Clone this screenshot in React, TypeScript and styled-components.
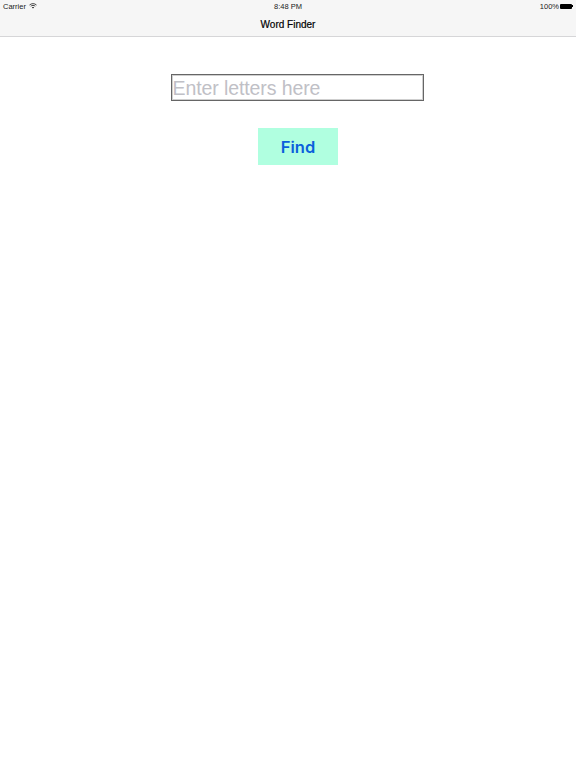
import styled, { createGlobalStyle } from "styled-components";

const GlobalStyle = createGlobalStyle`
  html, body {
    margin: 0;
    padding: 0;
    background: #ffffff;
  }
  body {
    font-family: "Liberation Sans", Arial, sans-serif;
  }
`;

const Page = styled.div`
  width: 576px;
  height: 768px;
  display: flex;
  flex-direction: column;
  overflow: hidden;
`;

const Header = styled.header`
  height: 36px;
  flex: none;
  background: #f6f6f6;
  border-bottom: 1px solid #d6d6d8;
  display: flex;
  flex-direction: column;
`;

const StatusBar = styled.div`
  height: 12px;
  padding: 0 3px;
  display: grid;
  grid-template-columns: 1fr auto 1fr;
  align-items: center;
  font-size: 7.5px;
  color: #1a1a1a;
`;

const StatusLeft = styled.div`
  display: flex;
  align-items: center;
  gap: 3px;
`;

const StatusRight = styled.div`
  display: flex;
  align-items: center;
  justify-content: flex-end;
  gap: 1px;
`;

const BatteryBody = styled.div`
  width: 12px;
  height: 5px;
  background: #000000;
  border-radius: 1px;
`;

const BatteryTip = styled.div`
  width: 1px;
  height: 2px;
  margin-left: -1px;
  background: #000000;
`;

const NavTitle = styled.div`
  flex: 1;
  display: flex;
  align-items: center;
  justify-content: center;
  font-size: 10px;
  font-weight: 400;
  -webkit-text-stroke: 0.2px #000000;
  color: #000000;
`;

const Content = styled.main`
  display: flex;
  flex-direction: column;
  align-items: center;
  padding: 37px 0 0 20px;
  gap: 27px;
`;

const LetterInput = styled.input`
  box-sizing: border-box;
  width: 253px;
  height: 27px;
  padding: 1px 1px 0;
  margin: 0 2px 0 0;
  border: 1px solid #666666;
  box-shadow: inset 0 0 0 1px #cfcfcf;
  border-radius: 0;
  outline: none;
  background: #ffffff;
  font-family: "Liberation Sans", Arial, sans-serif;
  font-size: 19.5px;
  letter-spacing: -0.1px;
  color: #000000;

  &::placeholder {
    color: #c0c0c6;
    opacity: 1;
  }
`;

const FindButton = styled.button`
  width: 80px;
  height: 37px;
  padding: 0;
  border: none;
  background: #b0ffe0;
  color: #0a60dc;
  font-family: Inter, "Liberation Sans", sans-serif;
  font-size: 16.5px;
  font-weight: 600;
`;

const WifiIcon = () => (
  <svg width="8" height="6" viewBox="0 0 8 6">
    <path
      d="M0.5 2 C2.5 0.2 5.5 0.2 7.5 2 M1.7 3.2 C3 2.2 5 2.2 6.3 3.2"
      fill="none"
      stroke="#1a1a1a"
      strokeWidth="0.8"
    />
    <path d="M4 5.6 L2.9 4.3 C3.5 3.9 4.5 3.9 5.1 4.3 Z" fill="#1a1a1a" />
  </svg>
);

export default function App() {
  return (
    <Page>
      <GlobalStyle />
      <Header>
        <StatusBar>
          <StatusLeft>
            Carrier
            <WifiIcon />
          </StatusLeft>
          <div>8:48 PM</div>
          <StatusRight>
            100%
            <BatteryBody />
            <BatteryTip />
          </StatusRight>
        </StatusBar>
        <NavTitle>Word Finder</NavTitle>
      </Header>
      <Content>
        <LetterInput placeholder="Enter letters here" />
        <FindButton>Find</FindButton>
      </Content>
    </Page>
  );
}
